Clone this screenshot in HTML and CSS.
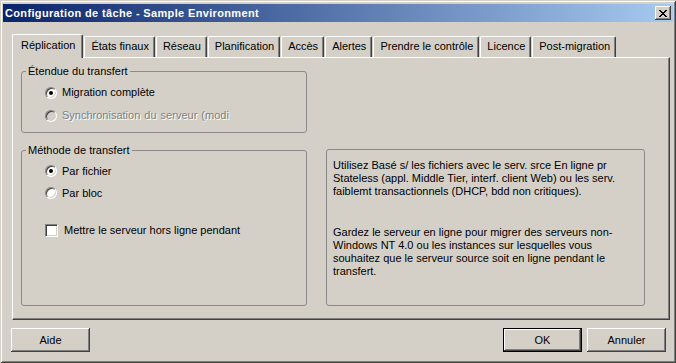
FILE: index.html
```html
<!DOCTYPE html>
<html lang="fr">
<head>
<meta charset="utf-8">
<title>Configuration de tâche</title>
<link rel="stylesheet" href="styles.css">
</head>
<body>
<div class="window">
  <div class="titlebar">
    <span class="title">Configuration de tâche - Sample Environment</span>
    <button class="close" aria-label="Fermer">
      <svg width="8" height="7" viewBox="0 0 8 7" shape-rendering="crispEdges"><path d="M0 0h2v1H0zM6 0h2v1H6zM1 1h2v1H1zM5 1h2v1H5zM2 2h4v1H2zM3 3h2v1H3zM2 4h4v1H2zM1 5h2v1H1zM5 5h2v1H5zM0 6h2v1H0zM6 6h2v1H6z" fill="#000"/></svg>
    </button>
  </div>

  <div class="tabs">
    <div class="tab active">Réplication</div>
    <div class="tab">États finaux</div>
    <div class="tab">Réseau</div>
    <div class="tab">Planification</div>
    <div class="tab">Accès</div>
    <div class="tab">Alertes</div>
    <div class="tab">Prendre le contrôle</div>
    <div class="tab">Licence</div>
    <div class="tab">Post-migration</div>
  </div>

  <div class="panel">
    <div class="col-left">
      <fieldset class="group g1">
        <legend>Étendue du transfert</legend>
        <div class="opt"><span class="radio checked"></span><span>Migration complète</span></div>
        <div class="opt disabled"><span class="radio"></span><span class="spaced">Synchronisation du serveur (modi</span></div>
      </fieldset>
      <fieldset class="group g2">
        <legend>Méthode de transfert</legend>
        <div class="opt tight"><span class="radio checked"></span><span>Par fichier</span></div>
        <div class="opt tight"><span class="radio"></span><span>Par bloc</span></div>
        <div class="opt check-row"><span class="checkbox"></span><span>Mettre le serveur hors ligne pendant</span></div>
      </fieldset>
    </div>
    <div class="info">
      <p>Utilisez Basé s/ les fichiers avec le serv. srce En ligne pr<br>Stateless (appl. Middle Tier, interf. client Web) ou les serv.<br>faiblemt transactionnels (DHCP, bdd non critiques).</p>
      <p class="para2">Gardez le serveur en ligne pour migrer des serveurs non-<br>Windows NT 4.0 ou les instances sur lesquelles vous<br>souhaitez que le serveur source soit en ligne pendant le<br>transfert.</p>
    </div>
  </div>

  <div class="buttons">
    <button class="btn">Aide</button>
    <span class="spacer"></span>
    <button class="btn default">OK</button>
    <button class="btn">Annuler</button>
  </div>
</div>
</body>
</html>
```

FILE: styles.css
```css
* { box-sizing: border-box; }

html, body {
  margin: 0;
  padding: 0;
  background: #d4d0c8;
}

body {
  font-family: "Liberation Sans", Arial, sans-serif;
  font-size: 11px;
  line-height: 13px;
  color: #000;
}

.window {
  width: 676px;
  height: 363px;
  padding: 4px 3px 3px 3px;
  background: #d4d0c8;
  box-shadow: inset 1px 1px #d4d0c8, inset -1px -1px #404040,
              inset 2px 2px #ffffff, inset -2px -2px #808080;
  display: flex;
  flex-direction: column;
}

/* Title bar */
.titlebar {
  height: 18px;
  display: flex;
  align-items: center;
  padding-left: 2px;
  background: linear-gradient(to right, #0a246a, #a6caf0);
}

.title {
  flex: 1;
  color: #fff;
  font-weight: bold;
  font-size: 11px;
  letter-spacing: 0.35px;
  line-height: 18px;
  white-space: nowrap;
}

.close {
  width: 16px;
  height: 14px;
  margin-right: 2px;
  padding: 0;
  border: 0;
  background: #d4d0c8;
  display: flex;
  align-items: center;
  justify-content: center;
  box-shadow: inset -1px -1px #404040, inset 1px 1px #ffffff,
              inset -2px -2px #808080, inset 2px 2px #d4d0c8;
}

.close svg { display: block; margin-left: -1px; }

/* Tabs */
.tabs {
  display: flex;
  align-items: flex-end;
  height: 23px;
  margin: 12px 0 0 9px;
}

.tab {
  height: 21px;
  padding: 3px 5px 0 6px;
  border-top: 1px solid #fff;
  border-left: 1px solid #fff;
  border-right: 1px solid #404040;
  border-radius: 2px 2px 0 0;
  box-shadow: inset -1px 0 #808080;
  white-space: nowrap;
  background: #d4d0c8;
}

.tab + .tab { margin-left: 1px; }

.tab.active {
  height: 24px;
  margin-bottom: -1px;
  padding: 4px 7px 0 8px;
  position: relative;
  z-index: 1;
}

/* Panel */
.panel {
  width: 658px;
  height: 263px;
  margin-left: 9px;
  padding: 7px 23px 13px 8px;
  border-top: 1px solid #fff;
  border-left: 1px solid #fff;
  border-right: 1px solid #404040;
  border-bottom: 1px solid #404040;
  box-shadow: inset -1px -1px #808080;
  display: grid;
  grid-template-columns: 286px 319px;
  column-gap: 19px;
}

.col-left {
  display: flex;
  flex-direction: column;
  gap: 11px;
}

.group {
  margin: 0;
  padding: 0;
  min-width: 0;
  border: 1px solid #8a8a8a;
  border-radius: 3px;
}

.group legend {
  margin-left: 4px;
  padding: 0 2px;
  line-height: 13px;
}

.g1 { padding: 3px 0 5px 0; }

.g2 {
  flex: 1;
  padding-top: 3px;
}

.opt {
  height: 23px;
  display: flex;
  align-items: center;
  gap: 5px;
  padding-left: 23px;
  white-space: nowrap;
}

.opt.tight { height: 22px; }

.check-row {
  margin-top: 15px;
  gap: 6px;
}

.radio {
  width: 12px;
  height: 12px;
  flex: none;
  border-radius: 50%;
  border: 1px solid;
  border-color: #808080 #ffffff #ffffff #808080;
  background: #fff;
  box-shadow: inset 1px 1px #404040, inset -1px -1px #d4d0c8;
  display: flex;
  align-items: center;
  justify-content: center;
}

.radio.checked::after {
  content: "";
  width: 4px;
  height: 4px;
  border-radius: 50%;
  background: #000;
}

.disabled { color: #808080; text-shadow: 1px 1px #ffffff; }
.disabled .radio { background: #d4d0c8; }
.spaced { word-spacing: 1px; }

.checkbox {
  width: 13px;
  height: 13px;
  flex: none;
  border: 1px solid;
  border-color: #808080 #ffffff #ffffff #808080;
  background: #fff;
  box-shadow: inset 1px 1px #404040, inset -1px -1px #d4d0c8;
}

/* Info box */
.info {
  margin-top: 84px;
  border: 1px solid #8a8a8a;
  border-radius: 3px;
  padding: 9px 6px 0 6px;
  white-space: nowrap;
}

.info p { margin: 0; }
.info .para2 { margin-top: 28px; }

/* Buttons */
.buttons {
  display: flex;
  margin-top: 8px;
  padding: 0 7px 0 8px;
  gap: 5px;
}

.spacer { flex: 1; }

.btn {
  width: 79px;
  height: 24px;
  padding: 0;
  border: 0;
  background: #d4d0c8;
  font-family: "Liberation Sans", Arial, sans-serif;
  font-size: 11px;
  color: #000;
  box-shadow: inset -1px -1px #404040, inset 1px 1px #ffffff,
              inset -2px -2px #808080, inset 2px 2px #d4d0c8;
}

.btn.default {
  border: 1px solid #000;
  box-shadow: inset -1px -1px #404040, inset 1px 1px #ffffff,
              inset -2px -2px #808080;
}
```
